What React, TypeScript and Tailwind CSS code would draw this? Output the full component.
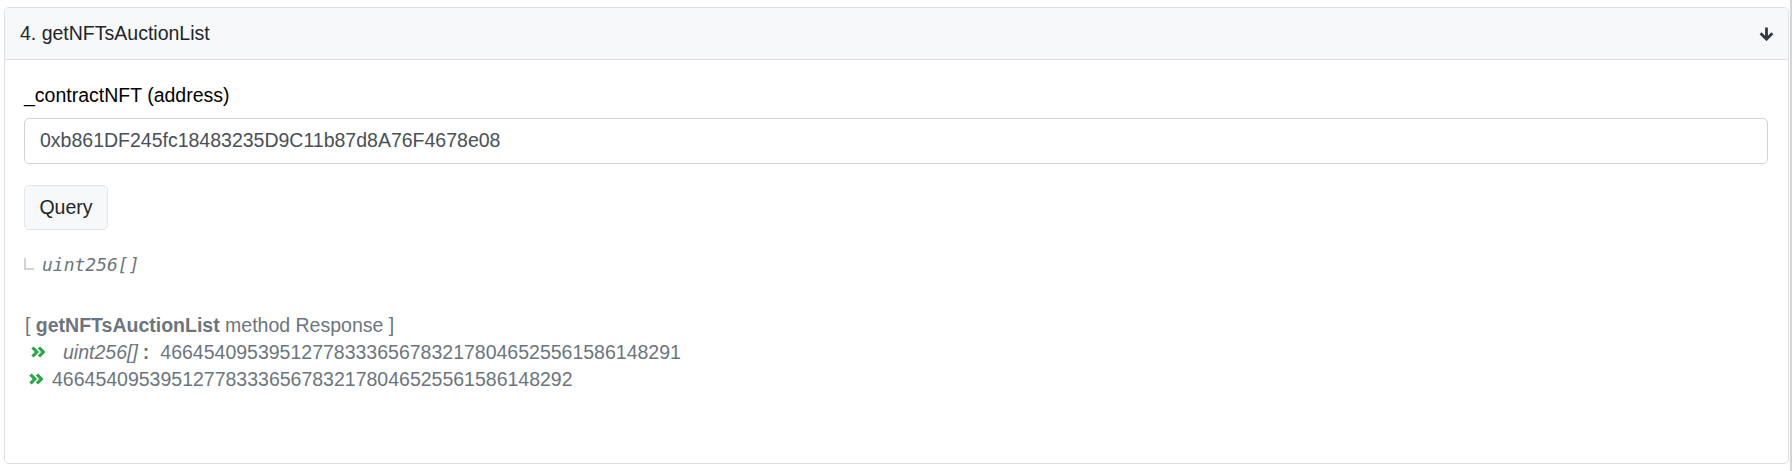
import React from "react";

function Chevrons() {
  return (
    <svg width="15" height="12" viewBox="0 0 15 12" className="shrink-0">
      <path d="M1.5 1.5 L5.8 6 L1.5 10.5 M8 1.5 L12.3 6 L8 10.5" fill="none" stroke="#28a745" strokeWidth="3.2" strokeLinecap="butt" strokeLinejoin="miter" />
    </svg>
  );
}

export default function App() {
  return (
    <div className="flex w-[1792px] h-[471px] bg-white font-['Liberation_Sans',Arial,sans-serif]">
      <div className="flex-1 pl-[4px] pt-[7px]">
        <div className="w-[1785px] h-[457px] border border-[#dddfe2] rounded-[5px] overflow-hidden flex flex-col">
          <div className="h-[52px] shrink-0 bg-[#f7f8f9] border-b border-[#dddfe2] flex items-center justify-between pl-[15px] pr-[14px]">
            <span className="text-[19.5px] text-[#212529] leading-none">4. getNFTsAuctionList</span>
            <svg width="15" height="14" viewBox="0 0 15 14">
              <path d="M7.5 0.5 V12 M1.6 6.3 L7.5 12.2 L13.4 6.3" fill="none" stroke="#343a40" strokeWidth="2.8" />
            </svg>
          </div>
          <div className="flex flex-col pl-[19px] pr-[20px] pt-[20px]">
            <div className="text-[19.5px] leading-[30px] text-black">_contractNFT (address)</div>
            <div className="mt-[8px] h-[46px] border border-[#ced4da] rounded-[5px] pl-[15px] flex items-center text-[19.5px] text-[#495057]">
              0xb861DF245fc18483235D9C11b87d8A76F4678e08
            </div>
            <div className="mt-[21px] w-[84px] h-[45px] border border-[#e2e5e9] rounded-[5px] bg-[#f7f8f9] flex items-center justify-center text-[19.5px] text-[#212529]">
              Query
            </div>
            <div className="mt-[26px] flex items-center h-[18px]">
              <div className="w-[10px] h-[12px] border-l-[2px] border-b-[2px] border-[#ced4da] mb-[2px]" />
              <span className="ml-[8px] font-['DejaVu_Sans_Mono',monospace] italic text-[18px] leading-none text-[#6c757d]">uint256[]</span>
            </div>
            <div className="mt-[37px] text-[19.5px] leading-[28px] text-[#6c757d] pl-[1px]">
              [ <span className="font-bold">getNFTsAuctionList</span> method Response ]
            </div>
            <div className="-mt-[1px] flex items-center text-[19.5px] leading-[28px] text-[#6c757d] pl-[7px]">
              <Chevrons />
              <span className="italic ml-[17px]">uint256[]</span>
              <span className="font-bold ml-[5px]">:</span>
              <span className="ml-[11px]">466454095395127783336567832178046525561586148291</span>
            </div>
            <div className="-mt-[1px] flex items-center text-[19.5px] leading-[28px] text-[#6c757d] pl-[5px]">
              <Chevrons />
              <span className="ml-[8px]">466454095395127783336567832178046525561586148292</span>
            </div>
          </div>
        </div>
      </div>
      <div className="w-[1px]" />
      <div className="w-[2px] bg-[#d4d4d4]" />
    </div>
  );
}
